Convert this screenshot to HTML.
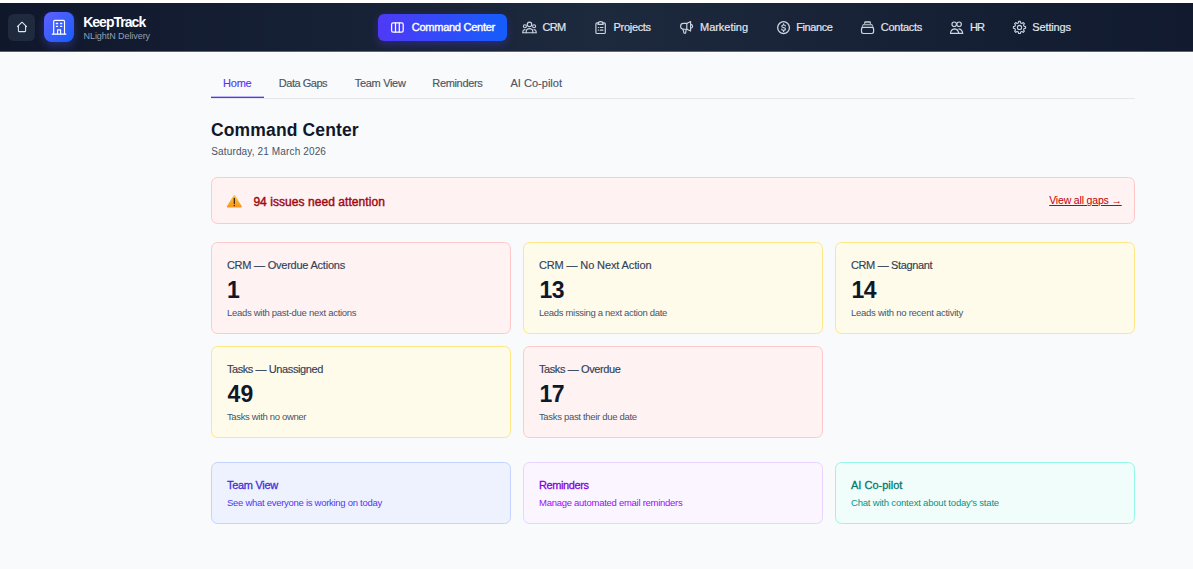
<!DOCTYPE html>
<html lang="en">
<head>
<meta charset="utf-8">
<title>KeepTrack — Command Center</title>
<style>
*{box-sizing:border-box;margin:0;padding:0}
html,body{width:1193px;height:569px;overflow:hidden;background:#f9fafb;font-family:"Liberation Sans",sans-serif;color:#0f172a}
.t{position:absolute;white-space:nowrap}
.topstrip{position:absolute;left:0;top:0;width:1193px;height:3px;background:#fff}
.nav{position:absolute;left:0;top:3px;width:1193px;height:48px;background:linear-gradient(90deg,#0f172b 0%,#1d293d 50%,#111a2e 100%)}
.nav2{position:absolute;left:0;top:51px;width:1193px;height:1px;opacity:.7;background:linear-gradient(90deg,#0f172b 0%,#1d293d 50%,#111a2e 100%)}
.navw{position:absolute;left:0;top:51px;width:1193px;height:2px;background:#fff}
.home{position:absolute;left:8.1px;top:14px;width:26.9px;height:26.9px;border-radius:5.5px;background:#1f2a3e}
.logo{position:absolute;left:43.9px;top:11.9px;width:30.2px;height:30.2px;border-radius:7.5px;background:linear-gradient(135deg,#615fff,#155dfc);box-shadow:0 4px 10px rgba(97,95,255,.3)}
.act{position:absolute;left:377.8px;top:13.8px;width:129.2px;height:27.2px;border-radius:6px;background:linear-gradient(90deg,#4f39f6,#155dfc);box-shadow:0 3px 9px rgba(79,57,246,.35)}
.tabs{position:absolute;left:211px;top:98px;width:924px;height:1px;background:#e5e7eb}
.tabline{position:absolute;left:211px;top:96px;width:53px;height:2px;background:linear-gradient(180deg,rgba(79,57,246,.35) 0,rgba(79,57,246,.35) 50%,#4f39f6 50%,#4f39f6 100%)}
.alert{position:absolute;left:211px;top:177px;width:924px;height:47px;border:1px solid #ffc9c9;background:#fef2f2;border-radius:6.5px}
.card{position:absolute;width:300px;height:92px;border-radius:6.5px;border:1px solid}
.card.r{background:#fef2f2;border-color:#ffc9c9}
.card.y{background:#fffbeb;border-color:#fee685}
.q{position:absolute;width:300px;height:62px;border-radius:6.5px;border:1px solid;top:462px}
</style>
</head>
<body>
<div class="topstrip"></div>
<div class="nav"></div><div class="navw"></div><div class="nav2"></div>
<div class="home"></div>
<svg style="position:absolute;left:15px;top:19px;" width="14" height="15" viewBox="15 19 14 15" fill="none" stroke="#e2e8f0" stroke-width="1.05" stroke-linecap="round" stroke-linejoin="round"><path d="M17.4 26.7 L22 22.2 L26.6 26.7"/><path d="M18.4 25.9 V31 Q18.4 31.6 19 31.6 H25 Q25.6 31.6 25.6 31 V25.9"/></svg>
<div class="logo"></div>
<svg style="position:absolute;left:48px;top:16px;" width="22" height="22" viewBox="48 16 22 22" fill="none" stroke="#fff" stroke-width="1.15" stroke-linecap="round" stroke-linejoin="round"><path d="M52.2 34.1 H65.9"/><path d="M53.7 34 V21.3 Q53.7 20.3 54.7 20.3 H63.5 Q64.5 20.3 64.5 21.3 V34"/><path d="M57.6 34 V29.8 H60.6 V34"/><path d="M56.4 23.5 H57.6 M60.6 23.5 H61.8 M56.4 26.3 H57.6 M60.6 26.3 H61.8" stroke-width="1.3"/></svg>
<div class="t" style="left:83.20px;top:13.25px;font-size:14px;line-height:18px;color:#fff;font-weight:700;letter-spacing:-0.98px;">KeepTrack</div>
<div class="t" style="left:83.50px;top:29.78px;font-size:9px;line-height:12px;color:#90a1b9;letter-spacing:-0.06px;">NLightN Delivery</div>
<div class="act"></div>
<svg style="position:absolute;left:389px;top:20px;" width="17" height="15" viewBox="389 20 17 15" fill="none" stroke="#fff" stroke-width="1.25" stroke-linecap="round" stroke-linejoin="round"><rect x="391.6" y="22.9" width="11.6" height="9.2" rx="1.6"/><path d="M395.5 23 V32 M399.3 23 V32"/></svg>
<div class="t" style="left:411.80px;top:19.99px;font-size:11px;line-height:14px;color:#fff;letter-spacing:-0.26px;-webkit-text-stroke:0.38px #fff;">Command Center</div>
<svg style="position:absolute;left:520px;top:19px;" width="19" height="17" viewBox="520 19 19 17" fill="none" stroke="#cbd5e1" stroke-width="1.15" stroke-linecap="round" stroke-linejoin="round"><circle cx="529.5" cy="24.4" r="2.2"/><circle cx="524.9" cy="26.2" r="1.5"/><circle cx="534.1" cy="26.2" r="1.5"/><path d="M526.2 32.7 V31.6 Q526.2 28.6 529.5 28.6 Q532.8 28.6 532.8 31.6 V32.7"/><path d="M522.9 32.7 H536.1"/><path d="M522.9 32.7 V31.4 Q522.9 29.7 525 29.6 M536.1 32.7 V31.4 Q536.1 29.7 534 29.6"/></svg>
<div class="t" style="left:542.60px;top:19.99px;font-size:11px;line-height:14px;color:#e2e8f0;letter-spacing:-0.69px;-webkit-text-stroke:0.18px #e2e8f0;">CRM</div>
<svg style="position:absolute;left:593px;top:19px;" width="16" height="17" viewBox="593 19 16 17" fill="none" stroke="#cbd5e1" stroke-width="1.15" stroke-linecap="round" stroke-linejoin="round"><path d="M598.2 22.9 H597 Q595.9 22.9 595.9 24 V32.4 Q595.9 33.5 597 33.5 H604.2 Q605.3 33.5 605.3 32.4 V24 Q605.3 22.9 604.2 22.9 H603"/><path d="M598 24.4 Q598 21.6 600.6 21.6 Q603.2 21.6 603.2 24.4 Z"/><path d="M600.2 27.5 H603 M600.2 30.1 H603"/><path d="M598.3 27.5 H598.5 M598.3 30.1 H598.5" stroke-width="1.2"/></svg>
<div class="t" style="left:613.60px;top:19.99px;font-size:11px;line-height:14px;color:#e2e8f0;letter-spacing:-0.32px;-webkit-text-stroke:0.18px #e2e8f0;">Projects</div>
<svg style="position:absolute;left:678px;top:19px;" width="18" height="17" viewBox="678 19 18 17" fill="none" stroke="#cbd5e1" stroke-width="1.15" stroke-linecap="round" stroke-linejoin="round"><path d="M690.6 21.6 V31 L686.8 29.2 H683.4 Q680.6 29.2 680.6 26.3 Q680.6 23.4 683.4 23.4 H686.8 Z"/><path d="M686.8 23.4 V29.2"/><path d="M683 29.2 L684 33.2 H685.6 L686.2 29.4"/><path d="M690.8 24.4 Q692.6 24.6 692.6 26.3 Q692.6 28 690.8 28.2"/></svg>
<div class="t" style="left:700.00px;top:19.99px;font-size:11px;line-height:14px;color:#e2e8f0;letter-spacing:-0.03px;-webkit-text-stroke:0.18px #e2e8f0;">Marketing</div>
<svg style="position:absolute;left:775px;top:19px;" width="18" height="17" viewBox="775 19 18 17" fill="none" stroke="#cbd5e1" stroke-width="1.15" stroke-linecap="round" stroke-linejoin="round"><circle cx="783.55" cy="27.6" r="5.9" stroke-width="1.3"/><path d="M785.4 26 Q785.2 25 783.6 25 Q781.8 25 781.8 26.3 Q781.8 27.4 783.6 27.6 Q785.5 27.8 785.5 29 Q785.5 30.3 783.6 30.3 Q781.9 30.3 781.7 29.2 M783.6 23.9 V25 M783.6 30.3 V31.4" stroke-width="1.2"/></svg>
<div class="t" style="left:796.20px;top:19.99px;font-size:11px;line-height:14px;color:#e2e8f0;letter-spacing:-0.41px;-webkit-text-stroke:0.18px #e2e8f0;">Finance</div>
<svg style="position:absolute;left:859px;top:19px;" width="18" height="17" viewBox="859 19 18 17" fill="none" stroke="#cbd5e1" stroke-width="1.15" stroke-linecap="round" stroke-linejoin="round"><rect x="861.5" y="27.3" width="12.1" height="6.2" rx="1.9" stroke-width="1.2"/><path d="M863.3 24.7 H871.8"/><path d="M864.7 23.3 V22.7 Q864.7 21.9 865.5 21.9 H869.6 Q870.4 21.9 870.4 22.7 V23.3" fill="rgba(203,213,225,.45)"/><path d="M863.1 24.8 L861.9 27.4 M872 24.8 L873.2 27.4" stroke-width="0.9"/></svg>
<div class="t" style="left:880.80px;top:19.99px;font-size:11px;line-height:14px;color:#e2e8f0;letter-spacing:-0.28px;-webkit-text-stroke:0.18px #e2e8f0;">Contacts</div>
<svg style="position:absolute;left:948px;top:19px;" width="18" height="17" viewBox="948 19 18 17" fill="none" stroke="#cbd5e1" stroke-width="1.15" stroke-linecap="round" stroke-linejoin="round"><circle cx="954.2" cy="24.2" r="2.25"/><circle cx="959.1" cy="24.2" r="2.25"/><path d="M950.5 33.4 Q950.9 29.3 954.4 28.9 Q956 28.9 957.3 30 "/><path d="M950.5 33.4 H962.7"/><path d="M962.7 33.4 Q962.2 29.3 958.9 28.9 M957.3 30 Q958.4 31.2 958.7 33.2"/></svg>
<div class="t" style="left:970.00px;top:19.99px;font-size:11px;line-height:14px;color:#e2e8f0;letter-spacing:-0.9px;-webkit-text-stroke:0.18px #e2e8f0;">HR</div>
<svg style="position:absolute;left:1011px;top:19px;" width="18" height="17" viewBox="1011 19 18 17" fill="none" stroke="#cbd5e1" stroke-width="1.1" stroke-linecap="round" stroke-linejoin="round"><path d="M1018.36 22.89 L1018.70 21.35 L1020.30 21.35 L1020.64 22.89 L1021.92 23.42 L1023.24 22.57 L1024.38 23.71 L1023.53 25.03 L1024.06 26.31 L1025.60 26.65 L1025.60 28.25 L1024.06 28.59 L1023.53 29.87 L1024.38 31.19 L1023.24 32.33 L1021.92 31.48 L1020.64 32.01 L1020.30 33.55 L1018.70 33.55 L1018.36 32.01 L1017.08 31.48 L1015.76 32.33 L1014.62 31.19 L1015.47 29.87 L1014.94 28.59 L1013.40 28.25 L1013.40 26.65 L1014.94 26.31 L1015.47 25.03 L1014.62 23.71 L1015.76 22.57 L1017.08 23.42 Z" stroke-linejoin="round"/><circle cx="1019.5" cy="27.45" r="2.1"/></svg>
<div class="t" style="left:1032.30px;top:19.99px;font-size:11px;line-height:14px;color:#e2e8f0;letter-spacing:-0.14px;-webkit-text-stroke:0.18px #e2e8f0;">Settings</div>
<div class="tabs"></div><div class="tabline"></div>
<div class="t" style="left:223.00px;top:75.99px;font-size:11px;line-height:14px;color:#4f39f6;letter-spacing:-0.21px;-webkit-text-stroke:0.15px #4f39f6;">Home</div>
<div class="t" style="left:278.80px;top:75.99px;font-size:11px;line-height:14px;color:#4a5565;letter-spacing:-0.48px;-webkit-text-stroke:0.15px #4a5565;">Data Gaps</div>
<div class="t" style="left:354.80px;top:75.99px;font-size:11px;line-height:14px;color:#4a5565;letter-spacing:-0.32px;-webkit-text-stroke:0.15px #4a5565;">Team View</div>
<div class="t" style="left:432.30px;top:75.99px;font-size:11px;line-height:14px;color:#4a5565;letter-spacing:-0.34px;-webkit-text-stroke:0.15px #4a5565;">Reminders</div>
<div class="t" style="left:510.40px;top:75.99px;font-size:11px;line-height:14px;color:#4a5565;letter-spacing:0.03px;-webkit-text-stroke:0.15px #4a5565;">AI Co-pilot</div>
<div class="t" style="left:211.00px;top:118.64px;font-size:17.5px;line-height:23px;color:#0f172b;font-weight:700;letter-spacing:0.14px;">Command Center</div>
<div class="t" style="left:211.30px;top:145.13px;font-size:10px;line-height:13px;color:#45556c;letter-spacing:0.14px;">Saturday, 21 March 2026</div>
<div class="alert"></div>
<svg style="position:absolute;left:226px;top:194px" width="17" height="15" viewBox="226 194 17 15"><defs><linearGradient id="wg" x1="0" y1="0" x2="0" y2="1"><stop offset="0" stop-color="#ffc83d"/><stop offset="1" stop-color="#f7921e"/></linearGradient></defs><path d="M233.5 195.6 Q234.35 194.4 235.2 195.6 L241.7 206.3 Q242.2 207.6 240.8 207.6 H227.9 Q226.5 207.6 227 206.3 Z" fill="url(#wg)"/><path d="M234.35 198.3 V203.4" stroke="#3b2a1a" stroke-width="1.3" stroke-linecap="round"/><circle cx="234.35" cy="205.5" r="0.8" fill="#3b2a1a"/></svg>
<div class="t" style="left:253.40px;top:193.54px;font-size:12px;line-height:16px;color:#9f0712;letter-spacing:0.06px;-webkit-text-stroke:0.4px #9f0712;">94 issues need attention</div>
<div class="t" style="left:1049.20px;top:193.06px;font-size:10.5px;line-height:14px;color:#c10007;letter-spacing:-0.17px;text-decoration:underline;text-underline-offset:1px;">View all gaps →</div>
<div class="card r" style="left:211px;top:242px"></div>
<div class="t" style="left:226.90px;top:258.29px;font-size:11px;line-height:14px;color:#314158;letter-spacing:-0.23px;-webkit-text-stroke:0.15px #314158;">CRM — Overdue Actions</div>
<div class="t" style="left:227.10px;top:274.83px;font-size:23px;line-height:30px;color:#0f172b;font-weight:700;">1</div>
<div class="t" style="left:226.90px;top:306.61px;font-size:9.5px;line-height:12px;color:#45556c;letter-spacing:-0.28px;">Leads with past-due next actions</div>
<div class="card y" style="left:523px;top:242px"></div>
<div class="t" style="left:538.90px;top:258.29px;font-size:11px;line-height:14px;color:#314158;letter-spacing:-0.12px;-webkit-text-stroke:0.15px #314158;">CRM — No Next Action</div>
<div class="t" style="left:539.50px;top:274.83px;font-size:23px;line-height:30px;color:#0f172b;font-weight:700;letter-spacing:-0.6px;">13</div>
<div class="t" style="left:538.90px;top:306.61px;font-size:9.5px;line-height:12px;color:#45556c;letter-spacing:-0.32px;">Leads missing a next action date</div>
<div class="card y" style="left:835px;top:242px"></div>
<div class="t" style="left:850.90px;top:258.29px;font-size:11px;line-height:14px;color:#314158;letter-spacing:-0.34px;-webkit-text-stroke:0.15px #314158;">CRM — Stagnant</div>
<div class="t" style="left:851.50px;top:274.83px;font-size:23px;line-height:30px;color:#0f172b;font-weight:700;letter-spacing:-0.5px;">14</div>
<div class="t" style="left:850.90px;top:306.61px;font-size:9.5px;line-height:12px;color:#45556c;letter-spacing:-0.25px;">Leads with no recent activity</div>
<div class="card y" style="left:211px;top:346px"></div>
<div class="t" style="left:226.90px;top:362.29px;font-size:11px;line-height:14px;color:#314158;letter-spacing:-0.41px;-webkit-text-stroke:0.15px #314158;">Tasks — Unassigned</div>
<div class="t" style="left:227.50px;top:378.83px;font-size:23px;line-height:30px;color:#0f172b;font-weight:700;letter-spacing:0.3px;">49</div>
<div class="t" style="left:226.90px;top:410.61px;font-size:9.5px;line-height:12px;color:#45556c;letter-spacing:-0.33px;">Tasks with no owner</div>
<div class="card r" style="left:523px;top:346px"></div>
<div class="t" style="left:538.90px;top:362.29px;font-size:11px;line-height:14px;color:#314158;letter-spacing:-0.39px;-webkit-text-stroke:0.15px #314158;">Tasks — Overdue</div>
<div class="t" style="left:539.50px;top:378.83px;font-size:23px;line-height:30px;color:#0f172b;font-weight:700;letter-spacing:-0.5px;">17</div>
<div class="t" style="left:538.90px;top:410.61px;font-size:9.5px;line-height:12px;color:#45556c;letter-spacing:-0.31px;">Tasks past their due date</div>
<div class="q" style="left:211px;background:#eef2ff;border-color:#c6d2ff"></div>
<div class="t" style="left:227.00px;top:478.19px;font-size:11px;line-height:14px;color:#432dd7;letter-spacing:-0.3px;-webkit-text-stroke:0.28px #432dd7;">Team View</div>
<div class="t" style="left:227.00px;top:496.81px;font-size:9.5px;line-height:12px;color:#4f39f6;letter-spacing:-0.28px;">See what everyone is working on today</div>
<div class="q" style="left:523px;background:#faf5ff;border-color:#e9d4ff"></div>
<div class="t" style="left:539.00px;top:478.19px;font-size:11px;line-height:14px;color:#8200db;letter-spacing:-0.4px;-webkit-text-stroke:0.28px #8200db;">Reminders</div>
<div class="t" style="left:539.00px;top:496.81px;font-size:9.5px;line-height:12px;color:#9810fa;letter-spacing:-0.27px;">Manage automated email reminders</div>
<div class="q" style="left:835px;background:#f0fdfa;border-color:#96f7e4"></div>
<div class="t" style="left:851.00px;top:478.19px;font-size:11px;line-height:14px;color:#00786f;-webkit-text-stroke:0.28px #00786f;">AI Co-pilot</div>
<div class="t" style="left:851.00px;top:496.81px;font-size:9.5px;line-height:12px;color:#009689;letter-spacing:-0.19px;">Chat with context about today's state</div>
</body>
</html>
